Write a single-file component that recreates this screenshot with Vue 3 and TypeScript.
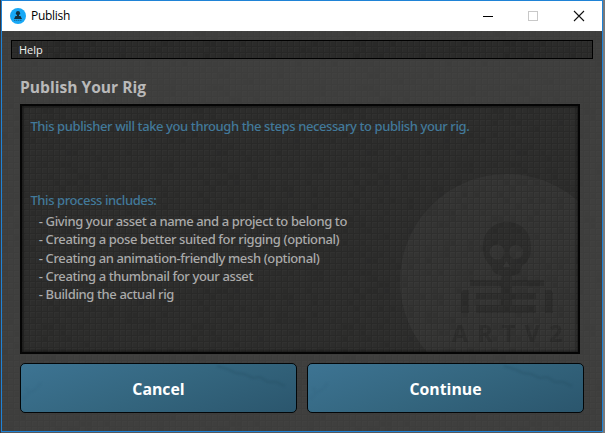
<script setup lang="ts">
interface Tile {
  x: number
  y: number
  tone: number
}

const steps: string[] = [
  'Giving your asset a name and a project to belong to',
  'Creating a pose better suited for rigging (optional)',
  'Creating an animation-friendly mesh (optional)',
  'Creating a thumbnail for your asset',
  'Building the actual rig',
]

// Small repeatable set of darker tiles for the textured surfaces
const tiles: Tile[] = []
let seed = 29
for (let row = 0; row < 18; row++) {
  for (let col = 0; col < 25; col++) {
    seed = (seed * 1103515245 + 12345) % 2147483648
    const value = seed / 2147483648
    if (value > 0.65) tiles.push({ x: col * 6, y: row * 6, tone: (value - 0.65) * 0.26 })
  }
}
</script>

<template>
  <div class="desktop">
    <main class="window">
      <header class="titlebar">
        <svg class="app-icon" width="16" height="16" viewBox="0 0 16 16">
          <circle cx="8" cy="8" r="8" fill="#18a8f6" />
          <circle cx="8" cy="5.200" r="2.100" fill="#12303f" />
          <path d="M7 7h2v1h1.500l1.500 2.900H4L5.500 8H7z" fill="#12303f" />
          <path d="M4 12.300h8" stroke="#126a9b" stroke-dasharray="1.400 .5" />
        </svg>
        <span class="caption">Publish</span>
        <svg class="controls" width="104" height="12" viewBox="0 0 104 12" fill="none" shape-rendering="crispEdges">
          <path d="M2 6.500h10" stroke="#000" />
          <rect x="47.500" y="1.500" width="9" height="9" stroke="#c8c8c8" />
          <path d="M93 1l10 10M103 1l-10 10" stroke="#111" stroke-width="1.100" shape-rendering="auto" />
        </svg>
      </header>

      <section class="content">
        <svg class="texture" width="600" height="400" aria-hidden="true">
          <defs>
            <pattern id="tiles" width="150" height="108" patternUnits="userSpaceOnUse">
              <rect v-for="(tile, i) in tiles" :key="i" :x="tile.x" :y="tile.y" width="5" height="5" fill="#000" :fill-opacity="tile.tone" />
            </pattern>
            <pattern id="grid" width="6" height="6" patternUnits="userSpaceOnUse">
              <path d="M5.500 0v6M0 5.500h5" stroke="#000" stroke-opacity=".09" />
              <path d="M.5 0v5M1 .5h4" stroke="#fff" stroke-opacity=".02" />
            </pattern>
          </defs>
          <rect width="600" height="400" fill="url(#tiles)" opacity=".35" />
          <rect width="600" height="400" fill="url(#grid)" opacity=".4" />
        </svg>

        <nav class="menu">
          <svg class="texture" width="600" height="20" aria-hidden="true">
            <rect width="600" height="20" fill="url(#tiles)" />
            <rect width="600" height="20" fill="url(#grid)" />
          </svg>
          <span class="menu-item">Help</span>
        </nav>

        <h1>Publish Your Rig</h1>

        <article class="panel">
          <svg class="texture" width="556" height="246" viewBox="22 106 556 246" aria-hidden="true">
            <circle cx="507" cy="281" r="107" fill="#343433" />
            <g fill="#2d2d2c" class="emblem">
              <path d="M483 247c0-15 10-25 24-25s24 10 24 25c0 9-3 15-9 19l-2 6c-3 3-8 4-13 4s-11-1-14-5l-2-5c-5-4-8-10-8-19z" />
              <path d="M502 275h10v5h32v6h-32v7h24v6h-24v6h24v8h-60v-8h25v-6h-25v-6h25v-7h-31v-6h31z" />
              <path d="M463 290h6v23h-8v-20zM545 290h6l2 3v20h-8z" />
              <text class="mark" x="452" y="342">ARTV2</text>
            </g>
            <g fill="#353534">
              <circle cx="497" cy="252" r="7.500" />
              <circle cx="516" cy="252" r="7" />
              <path d="M506.500 261l4 6h-8z" />
            </g>
            <rect x="22" y="106" width="556" height="246" fill="url(#tiles)" opacity=".8" />
            <rect x="22" y="106" width="556" height="246" fill="url(#grid)" />
          </svg>
          <p class="intro">This publisher will take you through the steps necessary to publish your rig.</p>
          <p class="lead">This process includes:</p>
          <ul>
            <li v-for="step in steps" :key="step">- {{ step }}</li>
          </ul>
        </article>

        <footer class="actions">
          <button v-for="label in ['Cancel', 'Continue']" :key="label" type="button">
            <svg class="crack" width="275" height="48" viewBox="0 0 275 48" fill="none" aria-hidden="true">
              <path d="M196 2l10 3 9 4 8 1 9 4 7-1 8 5 8 0 9 4" stroke="#244b60" stroke-opacity=".4" stroke-width="1.500" />
              <path d="M2 35l6-6 7-4 5-6M8 29l-3-5" stroke="#27566e" stroke-opacity=".12" stroke-width="1.500" />
            </svg>
            <span>{{ label }}</span>
          </button>
        </footer>
      </section>
    </main>
  </div>
</template>

<style>
body {
  margin: 0;
  overflow: hidden;
}
</style>

<style scoped>
* {
  box-sizing: border-box;
}
.desktop {
  width: 605px;
  height: 433px;
  padding: 0 2px 1px 1px;
  background: linear-gradient(90deg, #343941 0 1px, #55585c 1px 602px, #77797b 602px);
}
.window {
  width: 602px;
  height: 432px;
  border: 1px solid #1f83d6;
  background: #3f3f3e;
  font-family: "Noto Sans", "Open Sans", sans-serif;
}
.titlebar {
  height: 30px;
  display: flex;
  align-items: center;
  padding: 0 17px 0 8px;
  background: #fff;
}
.caption {
  margin-left: 5px;
  font: 12px/16px "Open Sans", sans-serif;
  letter-spacing: -.3px;
  color: #000;
}
.controls {
  margin-left: auto;
}
.content {
  position: relative;
  height: 400px;
  padding: 9px 0 0 18px;
}
.texture {
  position: absolute;
  inset: 0;
}
.menu {
  position: relative;
  width: 582px;
  height: 19px;
  margin-left: -9px;
  padding-left: 7px;
  border: 1px solid #000;
  background: #2b2b2a;
  overflow: hidden;
}
.menu-item {
  position: relative;
  display: block;
  font: 11px/18px "Open Sans", sans-serif;
  color: #f1f1f1;
}
h1 {
  position: relative;
  height: 22px;
  margin: 17px 0 6px;
  font: 700 15.600px/22px "Open Sans", sans-serif;
  color: #b9b9b9;
}
.panel {
  position: relative;
  width: 560px;
  height: 250px;
  padding: 10px 8px;
  border: 2px solid #050505;
  background: #2d2d2c;
  overflow: hidden;
}
.panel::after {
  content: "";
  position: absolute;
  inset: 0;
  box-shadow: inset 0 0 3px 1px rgba(0, 0, 0, .5);
}
.panel p,
.panel ul {
  position: relative;
  margin: 0;
  padding: 0;
  font-size: 13px;
  font-weight: 500;
  letter-spacing: -.4px;
  white-space: nowrap;
}
.panel p {
  height: 20px;
  padding-left: .4px;
  line-height: 20px;
  color: #42799a;
}
.panel .lead {
  margin-top: 54px;
}
.panel ul {
  margin-top: 2px;
  padding-left: 8.800px;
  list-style: none;
  line-height: 18.300px;
  letter-spacing: -.38px;
  color: #aaa;
}
.emblem {
  filter: blur(.7px);
}
.mark {
  font: 700 23px "Noto Sans", sans-serif;
  letter-spacing: 9.500px;
}
.actions {
  position: relative;
  display: flex;
  gap: 10px;
  margin-top: 9px;
}
button {
  position: relative;
  width: 277px;
  height: 50px;
  padding: 1px 0 0;
  border: 1px solid #020608;
  border-radius: 5px;
  background: linear-gradient(160deg, #3d7493 0%, #34667f 50%, #2b566d 100%);
  color: #fff;
  font: 700 15.800px/22px "Open Sans", sans-serif;
}
button span {
  position: relative;
}
.crack {
  position: absolute;
  inset: 0;
  filter: blur(.8px);
}
</style>
